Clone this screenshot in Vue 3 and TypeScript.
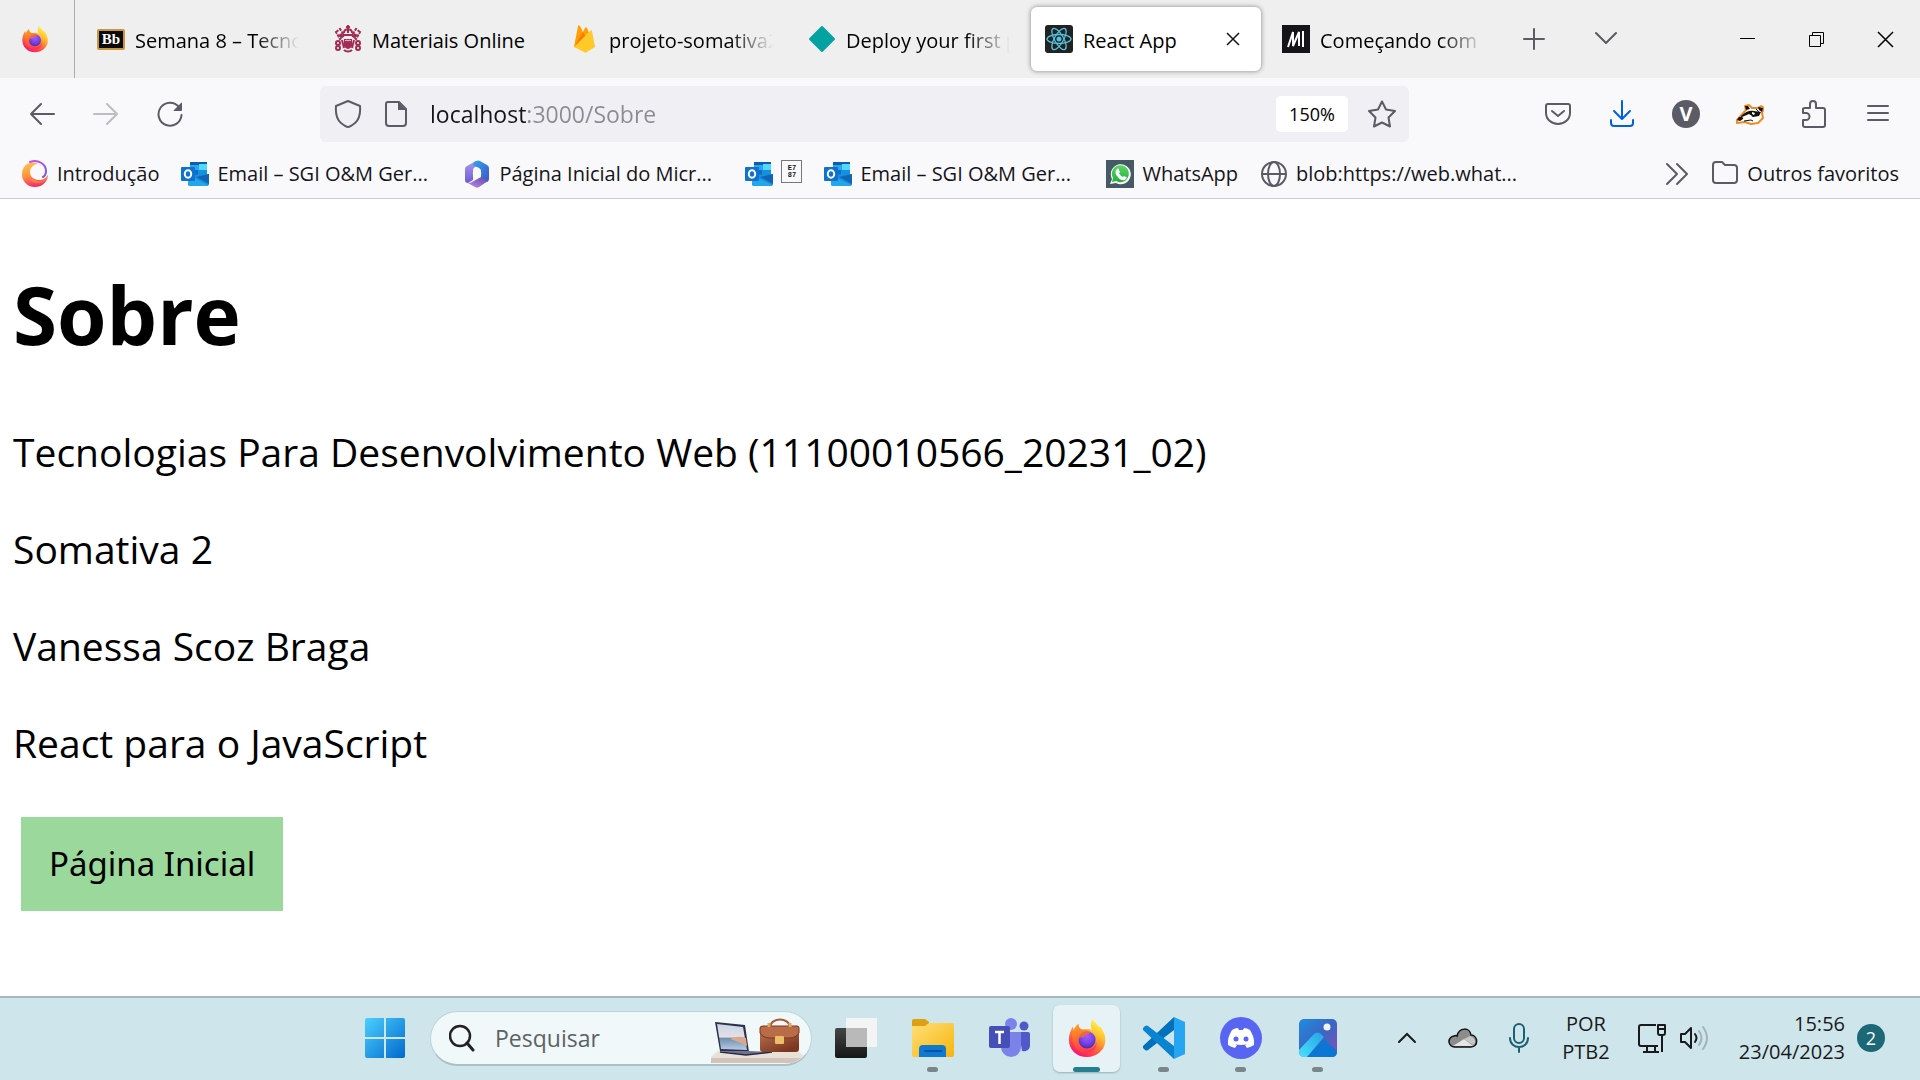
<script setup lang="ts">
import { ref } from 'vue'

interface Tab {
  title: string
  icon?: string
  mark?: string
  active?: boolean
}

interface Bookmark {
  label: string
  icon: string
  clipped?: boolean
  glyph?: string[]
}

interface Tool {
  name: string
  icon?: string
  initial?: string
}

interface TaskApp {
  name: string
  icon: string
  running?: boolean
  active?: boolean
}

const tabs: Tab[] = [
  { title: 'Semana 8 – Tecnologias', mark: 'Bb' },
  { title: 'Materiais Online', icon: 'crest' },
  { title: 'projeto-somativa2', icon: 'firebase' },
  { title: 'Deploy your first project', icon: 'diamond' },
  { title: 'React App', icon: 'react', active: true },
  { title: 'Começando com', icon: 'mdn' },
]

const bookmarks: Bookmark[] = [
  { label: 'Introdução', icon: 'firefox-swirl' },
  { label: 'Email – SGI O&M Ger...', icon: 'outlook', clipped: true },
  { label: 'Página Inicial do Micr...', icon: 'm365', clipped: true },
  { label: '', icon: 'outlook', glyph: ['E7', '87'] },
  { label: 'Email – SGI O&M Ger...', icon: 'outlook', clipped: true },
  { label: 'WhatsApp', icon: 'whatsapp' },
  { label: 'blob:https://web.what...', icon: 'globe', clipped: true },
]

const tools: Tool[] = [
  { name: 'Pocket', icon: 'pocket' },
  { name: 'Downloads', icon: 'download' },
  { name: 'Conta', initial: 'V' },
  { name: 'Privacy Badger', icon: 'badger' },
  { name: 'Extensões', icon: 'puzzle' },
  { name: 'Menu', icon: 'menu' },
]

const apps: TaskApp[] = [
  { name: 'Visão de tarefas', icon: 'taskview' },
  { name: 'Explorador de arquivos', icon: 'explorer', running: true },
  { name: 'Teams', icon: 'teams' },
  { name: 'Firefox', icon: 'firefox', running: true, active: true },
  { name: 'Visual Studio Code', icon: 'vscode', running: true },
  { name: 'Discord', icon: 'discord', running: true },
  { name: 'Fotos', icon: 'photos', running: true },
]

const paragraphs = [
  'Tecnologias Para Desenvolvimento Web (11100010566_20231_02)',
  'Somativa 2',
  'Vanessa Scoz Braga',
  'React para o JavaScript',
]

const address = ref('localhost:3000/Sobre')
const query = ref('')
</script>

<template>
  <div class="screen">
    <svg class="sprites" aria-hidden="true">
      <defs>
        <linearGradient id="ff-body" x1="0.8" y1="0" x2="0.25" y2="1">
          <stop offset="0.05" stop-color="#fff44f" />
          <stop offset="0.35" stop-color="#ffbd2b" />
          <stop offset="0.6" stop-color="#ff7139" />
          <stop offset="0.85" stop-color="#ff2f55" />
          <stop offset="1" stop-color="#e3128a" />
        </linearGradient>
        <radialGradient id="ff-core" cx="0.5" cy="0.3" r="0.7">
          <stop offset="0" stop-color="#a05cff" />
          <stop offset="0.6" stop-color="#7542e5" />
          <stop offset="1" stop-color="#4a2ab0" />
        </radialGradient>
        <linearGradient id="ff-fox" x1="0" y1="0" x2="0.6" y2="1">
          <stop offset="0" stop-color="#ffa01f" />
          <stop offset="0.5" stop-color="#ff6a2a" />
          <stop offset="1" stop-color="#ff2f55" />
        </linearGradient>
        <linearGradient id="swirl" x1="0.2" y1="0" x2="0.4" y2="1">
          <stop offset="0" stop-color="#ffc04a" />
          <stop offset="0.5" stop-color="#ff9a3c" />
          <stop offset="1" stop-color="#f52a6a" />
        </linearGradient>
        <linearGradient id="swirl-tail" x1="0" y1="0" x2="1" y2="1">
          <stop offset="0" stop-color="#d04cf0" />
          <stop offset="1" stop-color="#6a5be8" />
        </linearGradient>
        <linearGradient id="win" x1="0" y1="0" x2="1" y2="1">
          <stop offset="0" stop-color="#4cd0ff" />
          <stop offset="1" stop-color="#0068cc" />
        </linearGradient>
        <linearGradient id="m365-a" x1="0" y1="0" x2="1" y2="1">
          <stop offset="0" stop-color="#2fa6ea" />
          <stop offset="1" stop-color="#4353c9" />
        </linearGradient>
        <linearGradient id="m365-b" x1="0" y1="0" x2="0" y2="1">
          <stop offset="0" stop-color="#a99bf2" />
          <stop offset="1" stop-color="#6c5bd0" />
        </linearGradient>
        <linearGradient id="m365-c" x1="0" y1="1" x2="1" y2="0">
          <stop offset="0" stop-color="#c48bef" />
          <stop offset="1" stop-color="#5c4ba8" />
        </linearGradient>
        <linearGradient id="folder" x1="0" y1="0" x2="1" y2="1">
          <stop offset="0" stop-color="#ffdf7a" />
          <stop offset="1" stop-color="#f7b50c" />
        </linearGradient>
        <linearGradient id="photo" x1="0" y1="0" x2="1" y2="1">
          <stop offset="0" stop-color="#1f8ce0" />
          <stop offset="0.5" stop-color="#3a66c4" />
          <stop offset="1" stop-color="#8b4fb0" />
        </linearGradient>
        <linearGradient id="photo-hill" x1="0" y1="1" x2="1" y2="0">
          <stop offset="0" stop-color="#4be0fb" />
          <stop offset="1" stop-color="#22a4e6" />
        </linearGradient>
        <linearGradient id="dark-sq" x1="0" y1="0" x2="0" y2="1">
          <stop offset="0" stop-color="#454545" />
          <stop offset="1" stop-color="#161616" />
        </linearGradient>
        <linearGradient id="bag" x1="0" y1="0" x2="0.6" y2="1">
          <stop offset="0" stop-color="#c37a55" />
          <stop offset="1" stop-color="#7c3722" />
        </linearGradient>
        <linearGradient id="sky" x1="0" y1="0" x2="0" y2="1">
          <stop offset="0" stop-color="#c5d6ec" />
          <stop offset="0.5" stop-color="#e6dfe2" />
          <stop offset="0.55" stop-color="#6d90b0" />
          <stop offset="1" stop-color="#b9cbe3" />
        </linearGradient>
        <linearGradient id="wa" x1="0" y1="0" x2="0" y2="1">
          <stop offset="0" stop-color="#5fd669" />
          <stop offset="1" stop-color="#20b038" />
        </linearGradient>
      </defs>

      <symbol id="firefox" viewBox="-1 -1 42 42">
        <path fill="url(#ff-body)" d="M26 0c1 3 5 5 7 9l1-1c4 6 6 11 5 17-1 8-9 15-19 15S1 33 1 22c0-6 2-10 4-14l1 4c1-3 3-5 5-7 0 3 1 5 3 6h3c4-1 8 0 9 1-3-4-2-8 0-12z" />
        <circle cx="20" cy="22" r="9" fill="url(#ff-core)" />
        <path fill="url(#ff-fox)" d="M5 9l1 3c1-3 3-5 5-7 0 3 1 5 4 6 4 0 7 1 9 3l-4 3c-2 0-4 1-3 3-4-2-6 0-6 3 0 5 4 9 10 9 5 0 9-4 9-9 1 9-5 14-12 13C9 35 3 27 5 9z" opacity=".75" />
      </symbol>

      <symbol id="firefox-swirl" viewBox="0 0 28 28">
        <path fill="url(#swirl)" d="M4 6c-2 2-3 5-3 8a13 12.500 0 0 0 26 1c-2 3-5 5-9 5-6 0-9-4-9-8 0-5 4-8 8-8-5-3-11-1-13 2z" />
        <path fill="#ffb42e" d="M14 20c4 2 10 1 13-5 0 8-13 12-19 4z" opacity=".4" />
        <path fill="none" stroke="url(#swirl-tail)" stroke-width="2" stroke-linecap="round" d="M9 2c8-3 16 2 16 9 0 3-1 5-3 6" />
      </symbol>

      <symbol id="crest" viewBox="0 0 28 28">
        <g fill="none" stroke="#a32c55" stroke-width="2">
          <path d="M14 0v8M12 2h4M10 8c0-5 8-5 8 0M9 10h10" />
          <path d="M2 7l4-3 4 6-4 4zM26 7l-4-3-4 6 4 4z" stroke-dasharray="3 1" />
          <circle cx="4" cy="18" r="2" /><circle cx="24" cy="18" r="2" />
          <circle cx="4" cy="23" r="2" /><circle cx="24" cy="23" r="2" />
          <path d="M8 15l2 8M20 15l-2 8M10 25c2 2 6 2 8 0" />
        </g>
        <path fill="#a32c55" d="M10 14h8v7c-1 2-3 3-4 3s-3-1-4-3zM4 10l4-2 2 4-3 1zM24 10l-4-2-2 4 3 1z" />
        <path fill="none" stroke="#efefef" d="M11 16c1-1 2-1 3 0 1-1 2-1 3 0" />
      </symbol>

      <symbol id="firebase" viewBox="0 0 28 28">
        <path fill="#ffa000" d="M3 22L7 1c0-1 1-1 2 0l3 6 2-4c0-1 1-1 2 0l8 19z" />
        <path fill="#f57c00" d="M15 12l-3-5L3 22z" />
        <path fill="#ffca28" d="M24 22L21 6c0-1-1-1-2 0L3 22l10 5c1 1 2 1 3 0z" />
      </symbol>

      <symbol id="diamond" viewBox="0 0 28 28">
        <path fill="#05a2a2" stroke="#05a2a2" stroke-width="2" stroke-linejoin="round" d="M14 2l12 12-12 12L2 14z" />
      </symbol>

      <symbol id="react" viewBox="0 0 28 28">
        <rect width="28" height="28" rx="3" fill="#222" />
        <g fill="none" stroke="#53c1de" stroke-width="1.3">
          <ellipse cx="14" cy="14" rx="12" ry="4.500" />
          <ellipse cx="14" cy="14" rx="12" ry="4.500" transform="rotate(60 14 14)" />
          <ellipse cx="14" cy="14" rx="12" ry="4.500" transform="rotate(120 14 14)" />
        </g>
        <circle cx="14" cy="14" r="2.500" fill="#53c1de" />
      </symbol>

      <symbol id="mdn" viewBox="0 0 28 28">
        <rect width="28" height="28" fill="#15141a" />
        <path fill="none" stroke="#fff" stroke-width="2" d="M6 22L11 7v14L17 7v14" />
        <path stroke="#fff" stroke-width="2" d="M21 6v16" />
      </symbol>

      <symbol id="outlook" viewBox="0 0 28 26">
        <path fill="#0f5db0" d="M9 1h17v10H9z" />
        <path fill="#28a8ea" d="M9 4h8v7H9zM17 4h9v7h-9z" />
        <path fill="#50d9ff" d="M18 3h8v6h-8z" />
        <path fill="#0a6fc8" d="M9 9h9v9H9z" />
        <path fill="#1490df" d="M17 9h9v9h-9z" />
        <path fill="#1a8fe0" d="M7 14l21-1v10c0 1-1 2-2 2H9c-1 0-2-1-2-2z" />
        <path fill="#1066b5" d="M28 13v10L15 16z" />
        <path fill="#22a7ea" d="M7 14l20 10-1 1H9c-1 0-2-1-2-2z" />
        <rect y="6" width="14" height="14" rx="1" fill="#0f72d0" />
        <ellipse cx="7" cy="13" rx="3.200" ry="3.700" fill="none" stroke="#fff" stroke-width="2" />
      </symbol>

      <symbol id="m365" viewBox="0 0 28 28">
        <path fill="url(#m365-b)" d="M13 1L4 6q-2 1-2 3v11q0 3 3 3l5-3V10q0-2 2-3l4-2z" />
        <path fill="url(#m365-a)" d="M13 1q2-1 4 0l7 4q2 1 2 3v11q0 2-2 3l-6-4v-7q0-2-2-3l-6-3q0-3 3-4z" />
        <path fill="url(#m365-c)" d="M3 22q3 2 6 0l9-5 7 4-9 6q-2 1-4 0z" />
        <circle cx="14" cy="13.500" r="4.200" fill="#f9f9fb" />
      </symbol>

      <symbol id="whatsapp" viewBox="0 0 28 28">
        <rect width="28" height="28" fill="#455a64" />
        <path fill="#fff" d="M4 24l2-5a10 10 0 1 1 4 4z" />
        <path fill="url(#wa)" d="M6 22l1-4a8.500 8.500 0 1 1 3 3z" />
        <path fill="#fff" d="M11 9c1-1 2 0 2 1l1 2-1 1c1 2 2 3 4 4l1-1 2 1c1 0 1 1 0 2-3 3-7 0-9-3-2-2-2-5 0-7z" />
      </symbol>

      <symbol id="globe" viewBox="0 0 28 28">
        <g fill="none" stroke="#5b5b66" stroke-width="2">
          <circle cx="14" cy="14" r="12" />
          <ellipse cx="14" cy="14" rx="6" ry="12" />
          <path d="M2 14h24" />
        </g>
      </symbol>

      <symbol id="folder-line" viewBox="0 0 28 28">
        <path fill="none" stroke="#5b5b66" stroke-width="2" stroke-linejoin="round" d="M2 5q0-3 3-3h6l3 3h9q3 0 3 3v12q0 3-3 3H5q-3 0-3-3z" />
      </symbol>

      <symbol id="pocket" viewBox="0 0 28 28">
        <g fill="none" stroke="#5b5b66" stroke-width="2" stroke-linecap="round" stroke-linejoin="round">
          <path d="M4 4h20q2 0 2 2v7a12 11 0 0 1-24 0V6q0-2 2-2z" />
          <path d="M8 11l6 5 6-5" />
        </g>
      </symbol>

      <symbol id="download" viewBox="0 0 28 28">
        <g fill="none" stroke="#0061e0" stroke-width="2" stroke-linecap="round" stroke-linejoin="round">
          <path d="M14 1v17M6 11l8 8 8-8M3 20v3q0 3 3 3h16q3 0 3-3v-3" />
        </g>
      </symbol>

      <symbol id="badger" viewBox="0 0 28 28">
        <path fill="#fff" stroke="#f08a24" stroke-width="2" stroke-linejoin="round" d="M1 20l9-10-1-4 4-1 3 3 6 0 3-2 3 2-2 5 1 5-5 5-7 1-6-2-8 1z" />
        <path fill="#111" d="M1 20l2-3 3 0 1 2-3 2zM9 6l3 0 2 3-4 1zM22 7l5 1-1 4-3-2zM5 16c5-5 9-6 13-5l7 1-2 4-6 1-4-2-7 4z" />
        <path fill="#fff" d="M6 17l7-3 3 2-6 4zM16 12l3 1-1 2-2-1z" />
        <path fill="none" stroke="#111" d="M8 21l7-1 2 1M20 9l3 3" />
      </symbol>

      <symbol id="puzzle" viewBox="0 0 28 28">
        <path fill="none" stroke="#5b5b66" stroke-width="2" stroke-linejoin="round" d="M3 12V9q0-1 2-1h5V4a3 3 0 0 1 6 0v4h7q2 0 2 2v15q0 2-2 2H5q-2 0-2-2v-5h3a3 3 0 0 0 0-7H3z" />
      </symbol>

      <symbol id="menu" viewBox="0 0 28 28">
        <path stroke="#5b5b66" stroke-width="2" stroke-linecap="round" d="M4 6h20M4 13h20M4 20h20" />
      </symbol>

      <symbol id="taskview" viewBox="0 0 42 42">
        <rect y="11" width="32" height="30" rx="2" fill="url(#dark-sq)" />
        <rect x="11" y="1" width="31" height="29" rx="1" fill="#f4f4f4" opacity=".95" />
        <rect x="11" y="11" width="21" height="19" fill="#b9b9b9" />
      </symbol>

      <symbol id="explorer" viewBox="0 0 42 42">
        <path fill="#dea011" d="M0 4q0-2 2-2h11l4 3v5H0z" />
        <path fill="url(#folder)" d="M0 9h13l4-3h23q2 0 2 2v30q0 2-2 2H2q-2 0-2-2z" />
        <path fill="#0f78d0" d="M7 40V32q0-4 4-4h19q4 0 4 4v8z" />
        <path stroke="#0a5299" stroke-width="2" stroke-linecap="round" d="M13 34h16" />
      </symbol>

      <symbol id="teams" viewBox="0 0 42 42">
        <circle cx="35" cy="9" r="4.500" fill="#5059c9" />
        <path fill="#5059c9" d="M30 15h9q2 0 2 2v11c0 5-4 7-8 6z" />
        <circle cx="22" cy="7" r="6" fill="#7b83eb" />
        <path fill="#7b83eb" d="M12 15h20v15a10 10 0 0 1-20 0z" />
        <rect y="9" width="21" height="22" rx="2" fill="#464eb8" />
        <path stroke="#fff" stroke-width="2.500" d="M6 15h9M10.500 15v12" />
      </symbol>

      <symbol id="vscode" viewBox="0 0 42 42">
        <path fill="#0071ba" d="M31 0v13L5 33q-1 1-3 0l-2-2q-1-1 0-2z" />
        <path fill="#0a84d0" d="M31 42V29L5 9q-1-1-3 0l-2 2q-1 1 0 2z" />
        <path fill="#25a5f2" d="M31 0l11 5v32l-11 5z" />
      </symbol>

      <symbol id="discord" viewBox="0 0 42 42">
        <circle cx="21" cy="21" r="21" fill="#5865f2" />
        <path fill="#fff" d="M12 13q3-2 6-2l1 2h4l1-2q3 0 6 2 5 8 4 15-3 2-7 3l-2-3 2-1q-6 2-12 0l2 1-2 3q-4-1-7-3-1-7 4-15z" />
        <circle cx="16" cy="22" r="2.500" fill="#5865f2" /><circle cx="26" cy="22" r="2.500" fill="#5865f2" />
      </symbol>

      <symbol id="photos" viewBox="0 0 42 42">
        <rect x="2" y="2" width="38" height="38" rx="5" fill="url(#photo)" />
        <path fill="#0c76d4" d="M9 40l16-16q2-2 4 0l11 10q0 6-5 6z" />
        <path fill="url(#photo-hill)" d="M2 33l15-16q3-3 7 0l3 3L10 40H7q-5 0-5-6z" />
        <circle cx="30" cy="10" r="3.500" fill="#f2f2f2" />
      </symbol>
    </svg>

    <header class="browser">
      <div class="tab-strip">
        <button class="pinned" aria-label="Firefox View">
          <svg class="icon"><use href="#firefox" /></svg>
        </button>
        <div class="tabs" role="tablist">
          <button
            v-for="tab in tabs"
            :key="tab.title"
            class="tab"
            :class="{ active: tab.active }"
            role="tab"
            :aria-selected="!!tab.active"
          >
            <span v-if="tab.mark" class="tab-mark">{{ tab.mark }}</span>
            <svg v-else class="icon"><use :href="'#' + tab.icon" /></svg>
            <span class="tab-title">{{ tab.title }}</span>
            <svg v-if="tab.active" class="tab-close" viewBox="0 0 14 14">
              <path d="M1 1l12 12M13 1L1 13" stroke="#15141a" stroke-width="1.500" />
            </svg>
          </button>
        </div>
        <button class="strip-btn" aria-label="Nova aba">
          <svg width="22" height="22"><path d="M11 1v20M1 11h20" stroke="#5b5b66" stroke-width="2" stroke-linecap="round" /></svg>
        </button>
        <button class="strip-btn" aria-label="Listar abas">
          <svg width="22" height="22"><path d="M1 5l10 10L21 5" fill="none" stroke="#5b5b66" stroke-width="2" stroke-linecap="round" stroke-linejoin="round" /></svg>
        </button>
        <div class="window-controls">
          <button class="win-btn" aria-label="Minimizar">
            <svg width="17" height="17"><path d="M1 7.500h15" stroke="#000" /></svg>
          </button>
          <button class="win-btn" aria-label="Restaurar">
            <svg width="17" height="17"><path d="M1.500 4.500h11v11h-11zM4.500 4V1.500h11v11H13" fill="none" stroke="#000" /></svg>
          </button>
          <button class="win-btn" aria-label="Fechar">
            <svg width="17" height="17"><path d="M1 1l15 15M16 1L1 16" stroke="#000" stroke-width="1.500" /></svg>
          </button>
        </div>
      </div>

      <div class="nav-bar">
        <div class="nav-buttons">
          <button class="nav-btn" aria-label="Voltar">
            <svg class="icon" viewBox="0 0 28 28"><path d="M13 4L3 14l10 10M3 14h23" fill="none" stroke="#5b5b66" stroke-width="2" stroke-linecap="round" stroke-linejoin="round" /></svg>
          </button>
          <button class="nav-btn" aria-label="Avançar" disabled>
            <svg class="icon" viewBox="0 0 28 28"><path d="M15 4l10 10-10 10M25 14H2" fill="none" stroke="#bdbdc1" stroke-width="2" stroke-linecap="round" stroke-linejoin="round" /></svg>
          </button>
          <button class="nav-btn" aria-label="Recarregar">
            <svg class="icon" viewBox="0 0 28 28">
              <path d="M23 7A11.500 11.500 0 1 0 25.500 15" fill="none" stroke="#5b5b66" stroke-width="2" stroke-linecap="round" />
              <path d="M26 3v7q0 1-1 1h-7q-1 0 0-1l7-7q1-1 1 0z" fill="#5b5b66" />
            </svg>
          </button>
        </div>
        <div class="url-bar">
          <svg class="icon" viewBox="0 0 28 28"><path d="M14 1L26 6q1 12-5 17-5 4-7 4t-7-4Q1 18 2 6z" fill="none" stroke="#5b5b66" stroke-width="2" stroke-linejoin="round" /></svg>
          <svg class="icon" viewBox="0 0 28 28">
            <path d="M6 2h11l7 7v14q0 3-3 3H7q-3 0-3-3V4q0-2 2-2z" fill="none" stroke="#5b5b66" stroke-width="2" stroke-linejoin="round" />
            <path d="M16 2l8 8h-8z" fill="#5b5b66" />
          </svg>
          <input v-model="address" class="url-input" type="text" aria-label="Endereço" spellcheck="false" />
          <button class="zoom">150%</button>
          <button class="star" aria-label="Adicionar aos favoritos">
            <svg class="icon" viewBox="0 0 28 28"><path d="M14 1.500l4 8 9 1.500-6.500 6.500L22 26.500l-8-4-8 4 1.500-9L1 11l9-1.500z" fill="none" stroke="#5b5b66" stroke-width="2" stroke-linejoin="round" /></svg>
          </button>
        </div>
        <div class="tools">
          <button v-for="tool in tools" :key="tool.name" class="tool" :aria-label="tool.name">
            <span v-if="tool.initial" class="avatar">{{ tool.initial }}</span>
            <svg v-else class="icon"><use :href="'#' + tool.icon" /></svg>
          </button>
        </div>
      </div>

      <nav class="bookmarks">
        <a v-for="(mark, i) in bookmarks" :key="i" class="bookmark" :class="{ clipped: mark.clipped }" href="#">
          <svg class="icon"><use :href="'#' + mark.icon" /></svg>
          <span v-if="mark.glyph" class="hex-box">
            <span v-for="row in mark.glyph" :key="row">{{ row }}</span>
          </span>
          <span v-else class="bookmark-label">{{ mark.label }}</span>
        </a>
        <button class="more" aria-label="Mais favoritos">
          <svg width="24" height="24"><path d="M2 2l10 10L2 22M12 2l10 10-10 10" fill="none" stroke="#5b5b66" stroke-width="2" stroke-linecap="round" stroke-linejoin="round" /></svg>
        </button>
        <a class="bookmark" href="#">
          <svg class="icon"><use href="#folder-line" /></svg>
          <span class="bookmark-label">Outros favoritos</span>
        </a>
      </nav>
    </header>

    <main class="page">
      <h1>Sobre</h1>
      <p v-for="text in paragraphs" :key="text">{{ text }}</p>
      <button class="home-btn">Página Inicial</button>
    </main>

    <footer class="taskbar">
      <div class="task-center">
        <button class="start" aria-label="Iniciar">
          <svg width="40" height="40"><path fill="url(#win)" d="M2 0h17v19H0V2q0-2 2-2zM21 0h17q2 0 2 2v17H21zM0 21h19v19H2q-2 0-2-2zM21 21h19v17q0 2-2 2H21z" /></svg>
        </button>
        <label class="search">
          <svg width="26" height="28" viewBox="0 0 26 28">
            <circle cx="11" cy="12" r="10" fill="none" stroke="#222" stroke-width="2.500" />
            <path d="M18 19l6 7" stroke="#222" stroke-width="3" stroke-linecap="round" />
          </svg>
          <input v-model="query" class="search-input" type="text" placeholder="Pesquisar" />
          <svg class="search-art" width="94" height="46" viewBox="0 0 94 46" aria-hidden="true">
            <path d="M7 33h80l6 5q-6 7-16 7H0v-6z" fill="#e9e0d8" />
            <path d="M0 40h90q-6 5-13 5H0z" fill="#d2c4bb" />
            <path d="M4 4l30 3 4 27-29-1z" fill="#2c3048" />
            <path d="M6 6l26 3 4 23-26-1z" fill="url(#sky)" />
            <path d="M19 21q8-4 16-1l1 8q-7-4-17-7z" fill="#d8a98c" />
            <path d="M9 33l29 0 23 1-25 3z" fill="#6e7392" />
            <path d="M9 34l26 3 26-3" fill="none" stroke="#282b45" stroke-width="1.500" />
            <path d="M59 9c1-10 19-10 20 0" fill="none" stroke="#a55a38" stroke-width="2" />
            <rect x="49" y="8" width="39" height="26" rx="3" fill="url(#bag)" />
            <path d="M49 10q0-2 3-2h34q2 0 2 2v5q-3 5-10 5H59q-7 0-10-5z" fill="#b86c48" stroke="#7c3722" />
            <rect x="64" y="18" width="9" height="8" rx="1" fill="#eebd68" />
            <path d="M58 5v4M79 5v4" stroke="#e0aa5c" stroke-width="3" />
          </svg>
        </label>
        <div class="apps">
          <button
            v-for="app in apps"
            :key="app.name"
            class="app"
            :class="{ running: app.running, active: app.active }"
            :aria-label="app.name"
          >
            <svg class="app-icon"><use :href="'#' + app.icon" /></svg>
          </button>
        </div>
      </div>

      <div class="tray">
        <button class="tray-btn" aria-label="Mostrar ícones ocultos">
          <svg width="20" height="14"><path d="M2 11l8-8 8 8" fill="none" stroke="#1a1a1a" stroke-width="2" stroke-linecap="round" /></svg>
        </button>
        <button class="tray-btn cloud" aria-label="OneDrive">
          <svg width="30" height="22">
            <path d="M7 20a5 5 0 0 1-1-11q2-1 3 0c2-9 13-9 14-1 7 0 8 12 0 12z" fill="#8c8c8c" stroke="#111" stroke-width="1.500" />
            <path d="M5 19l11-7 9 7q-1 0-2 0H7z" fill="#e6e6e6" />
            <path d="M16 12l6-3q6 2 5 7l-2 2z" fill="#c6c6c6" />
          </svg>
        </button>
        <button class="tray-btn mic" aria-label="Microfone">
          <svg width="20" height="30" fill="none" stroke="#1d6073" stroke-width="2" stroke-linecap="round">
            <rect x="5" y="1" width="10" height="19" rx="5" />
            <path d="M1 15c0 12 18 12 18 0M10 24v5" />
          </svg>
        </button>
        <button class="tray-btn lang"><span>POR</span><span>PTB2</span></button>
        <button class="tray-btn system" aria-label="Rede e som">
          <svg width="30" height="30" fill="none" stroke="#1a1a1a" stroke-width="2" stroke-linejoin="round">
            <path d="M19 2H4Q2 2 2 4v17q0 2 2 2h17M10 24v4M18 24v4M6 29h16M21 2h7v8q0 2-2 2h-3q-2 0-2-2zM21 6h7M25 12v17" />
          </svg>
          <svg width="30" height="30" fill="none" stroke="#1a1a1a" stroke-width="2" stroke-linejoin="round" stroke-linecap="round">
            <path d="M2 11h4l6-6v20l-6-6H2z" />
            <path d="M16 11q3 4 0 8" />
            <path d="M20 8q5 7 0 14M24 4q8 11 0 22" stroke="#9fb5ba" />
          </svg>
        </button>
        <button class="tray-btn clock"><span>15:56</span><span>23/04/2023</span></button>
        <span class="badge">2</span>
      </div>
    </footer>
  </div>
</template>

<style>
body {
  margin: 0;
}
</style>

<style scoped>
.screen {
  display: flex;
  flex-direction: column;
  min-height: 100vh;
  background: #fff;
  color: #000;
  font-family: 'Open Sans', 'Noto Sans', sans-serif;
  font-size: 20px;
}

.sprites {
  position: absolute;
  width: 0;
  height: 0;
}

button {
  padding: 0;
  border: 0;
  background: none;
  color: inherit;
  font: inherit;
}

svg {
  display: block;
  flex: none;
}

.icon {
  width: 28px;
  height: 28px;
}

/* Tab strip */
.tab-strip {
  display: flex;
  height: 78px;
  background: #efefef;
}

.pinned {
  display: flex;
  align-items: center;
  justify-content: center;
  width: 75px;
  padding-right: 4px;
  box-sizing: border-box;
  border-right: 1px solid #aeaeae;
}

.tabs {
  display: flex;
  gap: 7px;
  padding: 7px 0 7px 8px;
}

.tab {
  display: flex;
  align-items: center;
  gap: 10px;
  box-sizing: border-box;
  width: 230px;
  padding: 0 14px;
  border-radius: 6px;
  text-align: left;
}

.tab.active {
  background: #fff;
  box-shadow: 0 0 5px rgba(0, 0, 0, 0.45);
}

.tab-mark {
  box-sizing: border-box;
  width: 28px;
  height: 21px;
  border: 2px solid #c9973a;
  border-radius: 2px;
  background: #0a0a0a;
  color: #fff;
  font: bold 15px/16px 'Liberation Serif', serif;
  text-align: center;
}

.tab-title {
  flex: 1;
  padding-top: 2px;
  overflow: hidden;
  white-space: nowrap;
  mask-image: linear-gradient(to left, transparent, #000 44px);
}

.tab.active .tab-title,
.tab:nth-child(2) .tab-title {
  mask-image: none;
}

.tab-close {
  width: 14px;
  height: 14px;
  margin-right: 7px;
}

.strip-btn {
  display: flex;
  align-items: center;
  justify-content: center;
  width: 72px;
}

.window-controls {
  display: flex;
  margin-left: auto;
}

.win-btn {
  display: flex;
  align-items: center;
  justify-content: center;
  width: 69px;
}

/* Navigation bar */
.nav-bar {
  display: flex;
  align-items: center;
  height: 71px;
  background: #f9f9fb;
}

.nav-buttons {
  display: flex;
  width: 320px;
  padding-left: 10px;
  box-sizing: border-box;
}

.nav-btn,
.tool {
  display: flex;
  align-items: center;
  justify-content: center;
  width: 64px;
}

.avatar {
  width: 28px;
  border-radius: 50%;
  background: #5b5b66;
  color: #fff;
  font-weight: bold;
  line-height: 28px;
}

.url-bar {
  display: flex;
  flex: 1;
  align-items: center;
  gap: 20px;
  height: 56px;
  padding: 0 13px 0 14px;
  box-sizing: border-box;
  border-radius: 6px;
  background: #f0f0f4;
}

.url-input {
  flex: 1;
  min-width: 0;
  padding: 0;
  border: 0;
  outline: 0;
  background: linear-gradient(90deg, #15141a 97px, #8b8b92 97px);
  background-clip: text;
  color: transparent;
  font: 23px/32px 'Open Sans', 'Noto Sans', sans-serif;
}

.zoom {
  width: 72px;
  height: 36px;
  border-radius: 5px;
  background: #fff;
  font-size: 18px;
}

.tools {
  display: flex;
  padding: 0 10px 0 117px;
}

/* Bookmarks */
.bookmarks {
  display: flex;
  align-items: center;
  gap: 22px;
  height: 49px;
  padding: 0 21px;
  border-bottom: 1px solid #ccc;
  background: #f9f9fb;
}

.bookmark {
  display: flex;
  align-items: center;
  gap: 8px;
  color: #15141a;
  text-decoration: none;
  white-space: nowrap;
}

.clipped {
  width: 260px;
}

.hex-box {
  display: flex;
  flex-direction: column;
  align-items: center;
  justify-content: center;
  box-sizing: border-box;
  width: 21px;
  height: 23px;
  margin-bottom: 4px;
  border: 1px solid #77777c;
  font: bold 7px/7px 'Liberation Mono', monospace;
}

.more {
  margin-left: auto;
}

/* Page */
.page {
  flex: 1;
  padding: 0 13px;
}

h1 {
  margin: 58px 0 52px;
  font-size: 80px;
  line-height: 114px;
}

p {
  margin: 0 0 40px;
  font-size: 39px;
  line-height: 57px;
}

.home-btn {
  height: 94px;
  margin: 6px 0 40px 8px;
  padding: 0 28px;
  background: #9ad89c;
  font: 33px/46px 'Noto Sans', sans-serif;
}

/* Taskbar */
.taskbar {
  display: flex;
  align-items: center;
  box-sizing: border-box;
  height: 84px;
  padding-bottom: 2px;
  border-top: 2px solid #a3b9bd;
  background: #cee6eb;
}

.task-center {
  display: flex;
  flex: 1;
  align-items: center;
  justify-content: flex-end;
}

.search {
  display: flex;
  align-items: center;
  gap: 20px;
  box-sizing: border-box;
  width: 382px;
  height: 55px;
  margin: 0 5px 0 25px;
  padding: 0 6px 0 18px;
  border: 1px solid #bdd3d9;
  border-bottom: 2px solid #a9c0c6;
  border-radius: 28px;
  background: #f1f8fa;
}

.search-input {
  flex: 1;
  min-width: 0;
  padding: 0;
  border: 0;
  outline: 0;
  background: none;
  font: 23px/32px 'Open Sans', 'Noto Sans', sans-serif;
}

.search-input::placeholder {
  color: #5c6264;
}

.search-art {
  align-self: flex-end;
}

.apps {
  display: flex;
}

.app {
  position: relative;
  display: flex;
  align-items: center;
  justify-content: center;
  width: 67px;
  height: 67px;
  margin: 0 5px;
  border-radius: 7px;
}

.app-icon {
  width: 42px;
  height: 42px;
}

.app.active {
  background: #e6f2f6;
  box-shadow: 0 1px 2px rgba(60, 100, 110, 0.4);
}

.app.active .app-icon {
  width: 40px;
  height: 40px;
}

.running::after {
  content: '';
  position: absolute;
  bottom: 0;
  left: 28px;
  width: 11px;
  height: 5px;
  border-radius: 3px;
  background: #7a8789;
}

.app.active::after {
  left: 20px;
  width: 27px;
  background: #24808e;
}

.tray {
  display: flex;
  align-items: center;
  margin-left: 41px;
  padding-right: 35px;
}

.tray-btn {
  display: flex;
  align-items: center;
  justify-content: center;
  color: #1a1a1a;
  line-height: 28px;
}

.cloud,
.mic {
  margin-left: 31px;
}

.lang {
  flex-direction: column;
  width: 50px;
  margin: 0 26px 0 32px;
}

.system {
  gap: 12px;
}

.clock {
  flex-direction: column;
  align-items: flex-end;
  width: 136px;
}

.badge {
  width: 28px;
  margin-left: 12px;
  border-radius: 14px;
  background: #1d6876;
  color: #fff;
  font-size: 18px;
  line-height: 28px;
  text-align: center;
}
</style>
